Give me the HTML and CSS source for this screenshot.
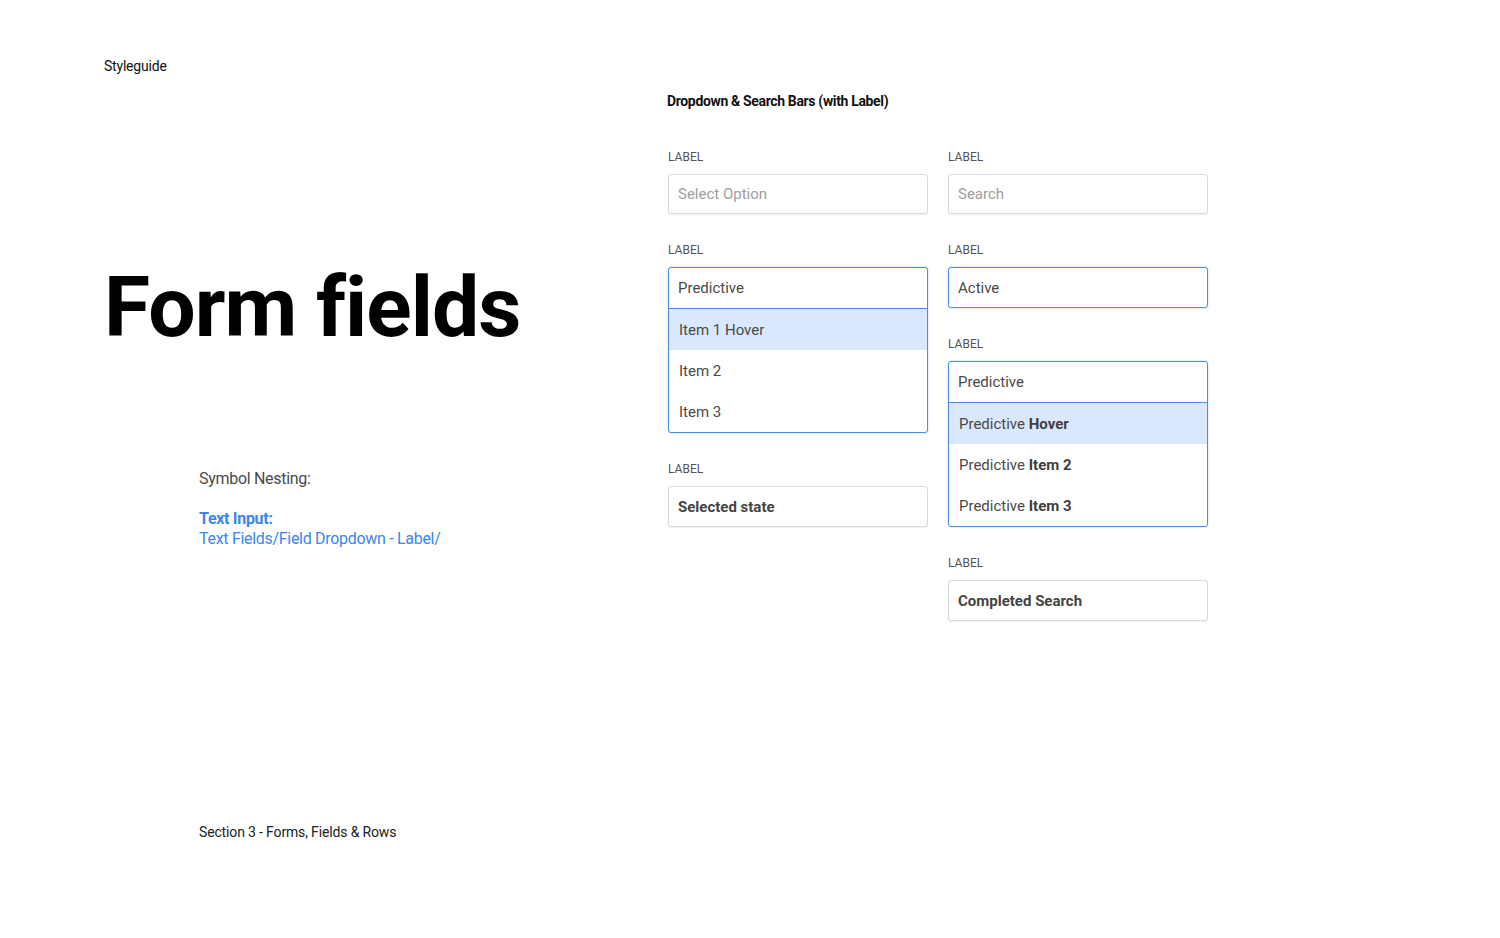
FILE: index.html
```html
<!DOCTYPE html>
<html lang="en">
<head>
<meta charset="utf-8">
<title>Styleguide - Form fields</title>
<link rel="stylesheet" href="styles.css">
</head>
<body>
<div class="page">
  <div class="left">
    <div class="brand">Styleguide</div>
    <h1 class="hero">Form fields</h1>
    <div class="nesting">
      <p class="nesting-title">Symbol Nesting:</p>
      <p class="nesting-path"><strong>Text Input:</strong><br>Text Fields/Field Dropdown - Label/</p>
    </div>
    <div class="section-name">Section 3 - Forms, Fields &amp; Rows</div>
  </div>
  <div class="right">
    <h2 class="group-title">Dropdown &amp; Search Bars (with Label)</h2>
    <div class="columns">
      <div class="col">
        <div class="field-group">
          <div class="label">LABEL</div>
          <div class="field placeholder">Select Option</div>
        </div>
        <div class="field-group">
          <div class="label">LABEL</div>
          <div class="dropdown">
            <div class="dropdown-head">Predictive</div>
            <div class="dropdown-item hover">Item 1 Hover</div>
            <div class="dropdown-item">Item 2</div>
            <div class="dropdown-item">Item 3</div>
          </div>
        </div>
        <div class="field-group">
          <div class="label">LABEL</div>
          <div class="field strong">Selected state</div>
        </div>
      </div>
      <div class="col">
        <div class="field-group">
          <div class="label">LABEL</div>
          <div class="field placeholder">Search</div>
        </div>
        <div class="field-group">
          <div class="label">LABEL</div>
          <div class="field active">Active</div>
        </div>
        <div class="field-group">
          <div class="label">LABEL</div>
          <div class="dropdown">
            <div class="dropdown-head">Predictive</div>
            <div class="dropdown-item hover">Predictive <b>Hover</b></div>
            <div class="dropdown-item">Predictive <b>Item 2</b></div>
            <div class="dropdown-item">Predictive <b>Item 3</b></div>
          </div>
        </div>
        <div class="field-group">
          <div class="label">LABEL</div>
          <div class="field strong">Completed Search</div>
        </div>
      </div>
    </div>
  </div>
</div>
</body>
</html>
```

FILE: styles.css
```css
html, body {
  margin: 0;
  padding: 0;
  background: #ffffff;
}

body {
  font-family: Roboto, "Liberation Sans", Arial, sans-serif;
  color: #111;
  width: 1500px;
  height: 938px;
  overflow: hidden;
}

.page {
  display: flex;
  padding-left: 104px;
}

.left {
  width: 563px;
  padding-top: 56px;
  display: flex;
  flex-direction: column;
}

.brand {
  font-size: 14px;
  line-height: 20px;
  letter-spacing: -0.2px;
  color: #111;
}

.hero {
  margin: 190px 0 0;
  font-size: 84px;
  line-height: 84px;
  font-weight: 700;
  letter-spacing: -1px;
  color: #000;
}

.nesting {
  margin: 119px 0 0 95px;
}

.nesting p {
  margin: 0;
  font-size: 16px;
  line-height: 20px;
  letter-spacing: -0.3px;
}

.nesting-title {
  color: #4a4a4a;
}

.nesting-path {
  margin-top: 20px !important;
  color: #3a86f0;
}

.nesting-path strong {
  font-weight: 700;
}

.section-name {
  margin: 273px 0 0 95px;
  font-size: 14px;
  line-height: 20px;
  letter-spacing: -0.15px;
  color: #222;
}

.right {
  padding-top: 91px;
  padding-left: 1px;
}

.group-title {
  margin: 0 0 0 -1px;
  font-size: 14px;
  line-height: 20px;
  font-weight: 700;
  letter-spacing: -0.35px;
  color: #111;
}

.columns {
  margin-top: 39px;
  display: grid;
  grid-template-columns: 260px 260px;
  column-gap: 20px;
  align-items: start;
}

.field-group {
  margin-bottom: 29px;
}

.label {
  font-size: 12px;
  line-height: 15px;
  color: #555;
  margin-bottom: 9px;
}

.field {
  box-sizing: border-box;
  height: 41px;
  border: 1px solid #d9d9d9;
  border-radius: 3px;
  box-shadow: 0 1px 2px rgba(0, 0, 0, 0.07);
  padding: 0 9px;
  display: flex;
  align-items: center;
  font-size: 15px;
  color: #4a4a4a;
  background: #fff;
}

.field.placeholder {
  height: 40px;
  color: #9e9e9e;
}

.field.strong {
  font-weight: 700;
  color: #444;
}

.field.active {
  border-color: #4a8fe6;
  box-shadow: 0 0 2px rgba(74, 143, 230, 0.45);
}

.dropdown {
  border: 1px solid #4a8fe6;
  border-radius: 3px;
  box-shadow: 0 0 2px rgba(74, 143, 230, 0.45);
  overflow: hidden;
  background: #fff;
}

.dropdown-head {
  height: 40px;
  border-bottom: 1px solid #4a8fe6;
  padding: 0 9px;
  display: flex;
  align-items: center;
  font-size: 15px;
  color: #4a4a4a;
}

.dropdown-item {
  height: 41px;
  padding: 0 10px;
  display: flex;
  align-items: center;
  font-size: 15px;
  color: #4a4a4a;
  white-space: pre;
}

.dropdown-item b {
  font-weight: 700;
  color: #3f3f3f;
}

.dropdown-item.hover {
  background: #d9e8fc;
}
```
